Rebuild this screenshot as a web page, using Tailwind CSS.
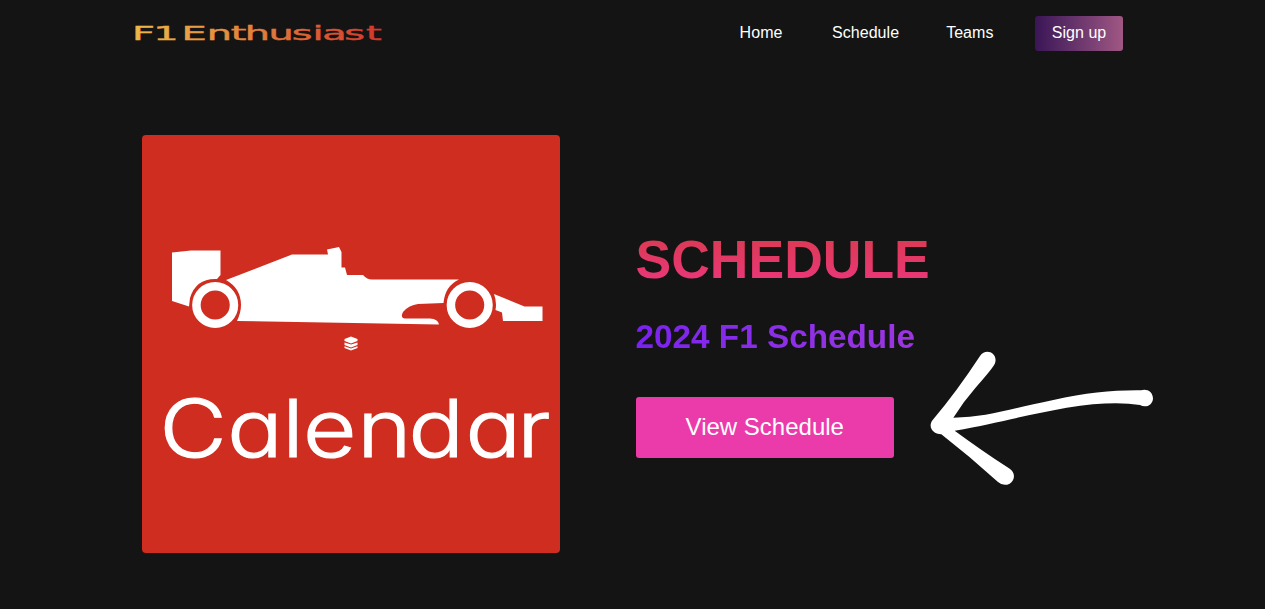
<!DOCTYPE html>
<html lang="en">
<head>
<meta charset="utf-8">
<title>F1 Enthusiast</title>
<script src="https://cdn.jsdelivr.net/npm/@tailwindcss/browser@4"></script>
</head>
<body class="relative h-[609px] overflow-hidden bg-[#141414] font-['Liberation_Sans',Arial,sans-serif] text-white">
<header class="flex h-[66px] items-center pl-[134px] pr-[142px]">
  <a class="mr-auto"><svg width="252" height="30" viewBox="0 0 252 30" overflow="visible">
    <defs><linearGradient id="logo" gradientUnits="userSpaceOnUse" x1="0" x2="119"><stop offset="0" stop-color="#edb849"/><stop offset=".5" stop-color="#e07f3c"/><stop offset="1" stop-color="#d4342a"/></linearGradient></defs>
    <text transform="scale(2.1 1)" x="-1 9.200 19 22.600 34.700 46.100 52.800 64.100 75.100 85 89.600 100.100 110.500" y="22" font-family="DejaVu Sans" font-size="19" fill="url(#logo)" stroke="url(#logo)" stroke-width=".4">F1 Enthusiast</text>
  </svg></a>
  <nav class="flex items-center text-base leading-6 tracking-[0.05px]">
    <a class="mr-[49.500px]">Home</a>
    <a class="mr-[47px]">Schedule</a>
    <a class="mr-[41.500px]">Teams</a>
    <a class="flex h-[35px] w-[88px] items-center justify-center rounded-[3px] bg-linear-to-r from-[#3b1556] to-[#a05783]">Sign up</a>
  </nav>
</header>
<main class="flex pl-[142px] pt-[69px]">
  <div class="h-[418px] w-[418px] shrink-0 overflow-hidden rounded-[4px] bg-[#cf2d1f]">
    <svg width="418" height="418" viewBox="142 135 418 418" fill="#fff">
      <path d="M172 252.500L191 250.500H220.500V275L217 279Q196 278 190 298L189 306.500L172 301Z"/>
      <path d="M226 280L292 254.500H328L327 249.500L339 247L341.500 252V267.500H345L347 275H363Q367 279.500 372 279.500H459Q445 286 443.500 303L418 304Q409 305 403 312Q400 318 405 318.500L430 318.500Q438 319 439 324.500L237 321Q245 304 237 290Q233 284 226 280Z"/>
      <path d="M494 294L524.500 306.500H542.500V321H503L502 312.500L495.500 310Q497 302 494 294Z"/>
      <g fill="none" stroke="#fff" stroke-width="8.500"><circle cx="215.200" cy="305" r="18.800"/><circle cx="469.700" cy="305" r="18.800"/></g>
      <path d="M344.500 339L351 336.500L357.500 339V341L351 343.500L344.500 341ZM344.500 342.500L351 344.500L357.500 342.500V345L351 347.500L344.500 345ZM344.500 346.300L351 348.500L357.500 346.300V348L351 350.500L344.500 348Z"/>
      <text transform="scale(1.160 1)" x="137.500 196 243.300 261.200 308 352.200 401.200 446" y="457.200" font-family="Inter" font-size="79.500" font-weight="300" stroke="#fff" stroke-width="1.200" class="[font-feature-settings:'cv11']">Calendar</text>
    </svg>
  </div>
  <section class="ml-[75.500px] pt-[93.500px]">
    <h1 class="w-max bg-linear-to-b from-[#d83a4c] to-[#ee357f] bg-clip-text text-[53.500px] font-bold leading-[62px] text-transparent">SCHEDULE</h1>
    <h2 class="mt-[26px] w-[440px] bg-linear-to-r from-[#7a22ee] to-[#b03bd8] bg-clip-text text-[33.300px] font-bold leading-10 text-transparent">2024 F1 Schedule</h2>
    <button class="mt-10 h-[61px] w-[258.500px] rounded-[3px] bg-[#eb3bab] text-2xl">View Schedule</button>
  </section>
</main>
<svg class="absolute left-[920px] top-[340px]" width="245" height="155" viewBox="0 0 735 465" fill="#fff">
  <path d="M38 240Q110 155 180 48C198 22 235 40 225 70Q221 82 166 144Q130 185 100 233C200 232 270 206 400 180C500 158 580 150 663 151C680 145 699 155 699 176C697 197 676 204 660 195Q575 182 440 203C330 222 240 248 104 272Q180 328 267 385C289 398 284 422 269 431Q250 440 234 426Q150 350 64 283C37 282 23 259 38 240Z"/>
</svg>
</body>
</html>
